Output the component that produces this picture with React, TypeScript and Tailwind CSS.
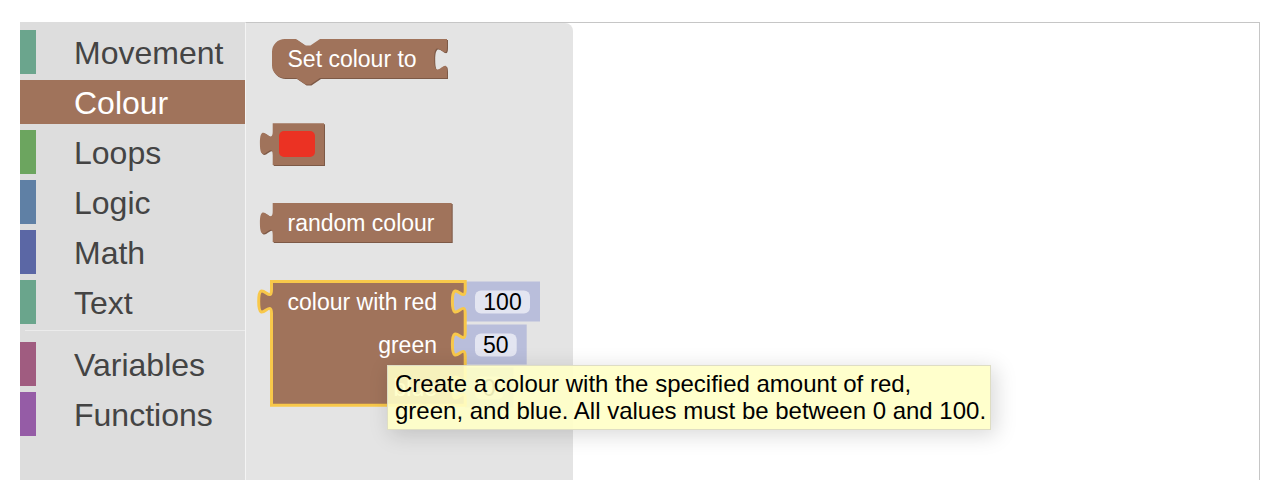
const BROWN = "#a0735b";
const BROWN_DARK = "#7d5946";
const SHADOW = "#b9bedb";

type Category = { name: string; colour: string; selected?: boolean };

const categories: Category[] = [
  { name: "Movement", colour: "#6ba58d" },
  { name: "Colour", colour: BROWN, selected: true },
  { name: "Loops", colour: "#6ca55f" },
  { name: "Logic", colour: "#5f80a5" },
  { name: "Math", colour: "#5b67a5" },
  { name: "Text", colour: "#6aa58c" },
];

const extraCategories: Category[] = [
  { name: "Variables", colour: "#a05c80" },
  { name: "Functions", colour: "#955ca6" },
];

// output tab going up / input notch going down, Blockly geras shapes at 1.6x
const TAB_UP = "c0,-16 -12.8,12.8 -12.8,-12 s12.8,4 12.8,-12";
const TAB_DOWN = "c0,16 -12.8,-12.8 -12.8,12 s12.8,-4 12.8,12";

function ToolboxRow({ cat }: { cat: Category }) {
  return (
    <div
      className={`flex h-[44px] mb-[6px] items-center ${cat.selected ? "bg-[#a0735b] text-white" : "text-[#444]"}`}
    >
      <div className="h-full w-[16px] shrink-0" style={{ backgroundColor: cat.colour }} />
      <span className="ml-[38px] pt-[2px] text-[32px] leading-[44px]">{cat.name}</span>
    </div>
  );
}

function Block({ d }: { d: string }) {
  return (
    <g>
      <path d={d} fill={BROWN_DARK} transform="translate(1,1)" />
      <path d={d} fill={BROWN} />
    </g>
  );
}

function NumberShadow({ y, right, value }: { y: number; right: number; value: string }) {
  const fieldW = right - 475 - 10;
  return (
    <g>
      <path d={`M465.2,${y} H${right} V${y + 40} H465.2 V${y + 32} ${TAB_UP} Z`} fill={SHADOW} />
      <rect x={475} y={y + 9} width={fieldW} height={23} rx={6} fill="#fff" fillOpacity={0.6} />
      <text x={475 + fieldW / 2} y={y + 28.5} textAnchor="middle" fontSize={23} fill="#000">
        {value}
      </text>
    </g>
  );
}

function Flyout() {
  const rgb = `M271.5,281.5 H465.2 V289.5 ${TAB_DOWN} V332.5 ${TAB_DOWN} V375.5 ${TAB_DOWN} V405.2 H271.5 V313.5 ${TAB_UP} Z`;
  return (
    <svg className="absolute left-0 top-0" width={327} height={457} viewBox="246 23 327 457">
      <Block
        d={`M272,51.8 A12.8,12.8 0 0 1 284.8,39 H296 l9.6,6.4 h4.8 l9.6,-6.4 H447 V47 ${TAB_DOWN} V78 H320 l-9.6,6.4 h-4.8 l-9.6,-6.4 H284.8 A12.8,12.8 0 0 1 272,65.2 Z`}
      />
      <text x={287.5} y={67} fontSize={23} fill="#fff">
        Set colour to
      </text>

      <Block d={`M272.7,123.3 H324 V165 H272.7 V155.3 ${TAB_UP} Z`} />
      <rect x={279} y={131} width={36} height={26} rx={5} fill="#eb3223" />

      <Block d={`M272.7,203 H451.7 V242 H272.7 V235 ${TAB_UP} Z`} />
      <text x={287.5} y={231} fontSize={23} fill="#fff">
        random colour
      </text>

      <NumberShadow y={281.5} right={540} value="100" />
      <NumberShadow y={324.5} right={526.7} value="50" />
      <NumberShadow y={367.5} right={513.5} value="0" />

      <path d={rgb} fill={BROWN} stroke="#f8c84a" strokeWidth={3} />
      <text x={287.5} y={310} fontSize={23} fill="#fff">
        colour with red
      </text>
      <text x={437} y={353} fontSize={23} fill="#fff" textAnchor="end">
        green
      </text>
      <text x={437} y={396} fontSize={23} fill="#fff" textAnchor="end">
        blue
      </text>
    </svg>
  );
}

export default function App() {
  return (
    <div className="relative h-[480px] w-[1274px] overflow-hidden bg-white font-['Liberation_Sans',Arial,sans-serif]">
      <div className="flex pl-[20px] pt-[22px]">
        <div className="h-[458px] w-[225px] shrink-0 bg-[#dddddd] pt-[8px]">
          {categories.map((cat) => (
            <ToolboxRow cat={cat} key={cat.name} />
          ))}
          <div className="mb-[11px] ml-[5px] h-px bg-[#ebebeb]" />
          {extraCategories.map((cat) => (
            <ToolboxRow cat={cat} key={cat.name} />
          ))}
        </div>
        <div className="h-[458px] w-[1015px] border-l border-t border-r border-l-[#f4f4f4] border-t-[#c6c6c6] border-r-[#c6c6c6] bg-white">
          <div className="relative h-full w-[327px] rounded-tr-[8px] bg-[#e4e4e4]">
            <Flyout />
          </div>
        </div>
      </div>

      <div className="absolute left-[387px] top-[365px] h-[65px] w-[604px] whitespace-nowrap border border-[#deddc4] bg-[#ffffc7]/90 px-[7px] pt-[4px] text-[24px] leading-[27px] text-black shadow-[4px_4px_20px_1px_rgba(0,0,0,0.15)]">
        Create a colour with the specified amount of red,
        <br />
        green, and blue. All values must be between 0 and 100.
      </div>
    </div>
  );
}
